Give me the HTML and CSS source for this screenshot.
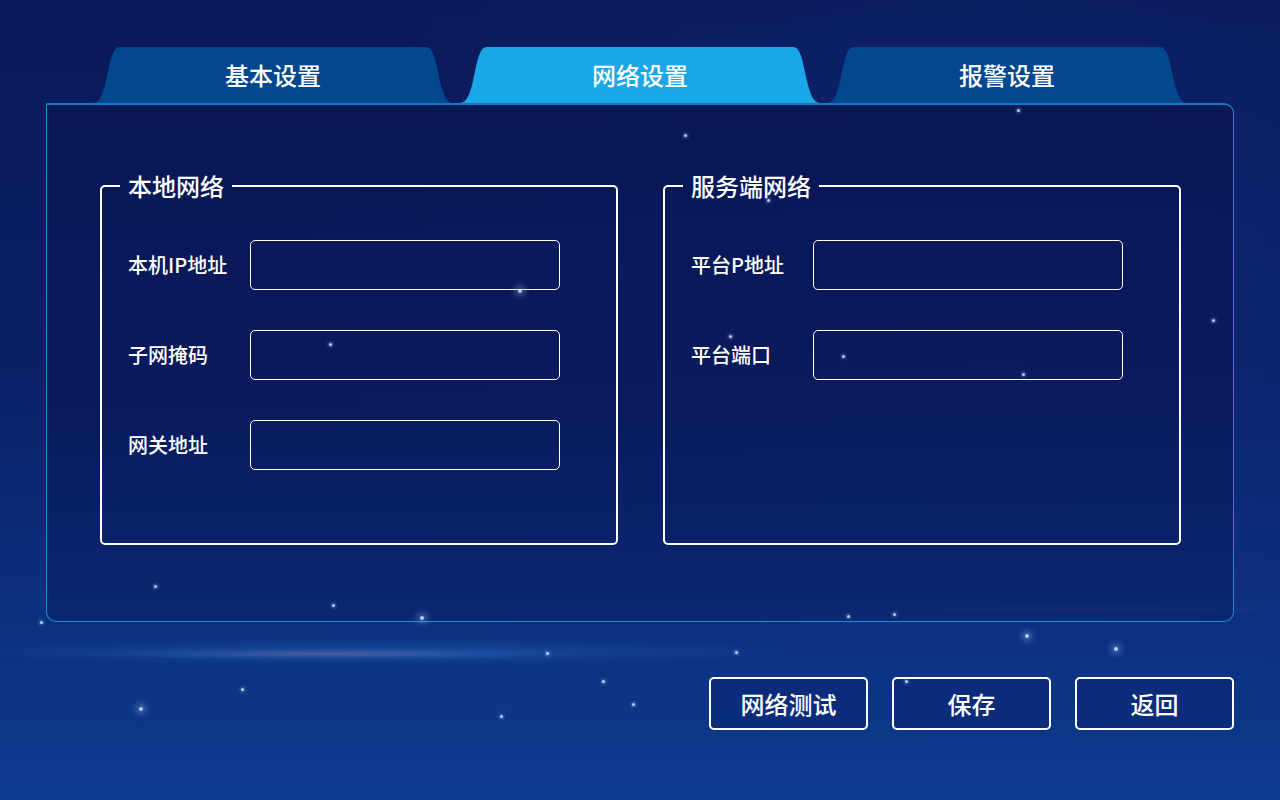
FILE: index.html
```html
<!DOCTYPE html>
<html lang="zh-CN">
<head>
<meta charset="utf-8">
<title>网络设置</title>
<link rel="stylesheet" href="styles.css">
</head>
<body>
<div class="app">
  <div class="stars">
    <span class="star" style="left:685px;top:135px"></span>
    <span class="star" style="left:1018px;top:110px"></span>
    <span class="star big" style="left:519px;top:290px"></span>
    <span class="star" style="left:330px;top:344px"></span>
    <span class="star" style="left:768px;top:200px"></span>
    <span class="star" style="left:730px;top:336px"></span>
    <span class="star" style="left:843px;top:356px"></span>
    <span class="star" style="left:1023px;top:374px"></span>
    <span class="star" style="left:1213px;top:320px"></span>
    <span class="star" style="left:155px;top:586px"></span>
    <span class="star" style="left:333px;top:605px"></span>
    <span class="star big" style="left:421px;top:617px"></span>
    <span class="star" style="left:41px;top:622px"></span>
    <span class="star" style="left:894px;top:614px"></span>
    <span class="star" style="left:848px;top:616px"></span>
    <span class="star big" style="left:1026px;top:635px"></span>
    <span class="star big" style="left:1115px;top:648px"></span>
    <span class="star" style="left:547px;top:653px"></span>
    <span class="star" style="left:736px;top:652px"></span>
    <span class="star" style="left:906px;top:681px"></span>
    <span class="star" style="left:242px;top:689px"></span>
    <span class="star big" style="left:140px;top:708px"></span>
    <span class="star" style="left:633px;top:704px"></span>
    <span class="star" style="left:501px;top:716px"></span>
    <span class="star" style="left:603px;top:681px"></span>
  </div>

  <nav class="tabs">
    <div class="tab">基本设置</div>
    <div class="tab active">网络设置</div>
    <div class="tab">报警设置</div>
  </nav>

  <section class="panel">
    <fieldset class="group">
      <legend>本地网络</legend>
      <div class="row"><label>本机IP地址</label><input class="field" type="text"></div>
      <div class="row"><label>子网掩码</label><input class="field" type="text"></div>
      <div class="row"><label>网关地址</label><input class="field" type="text"></div>
    </fieldset>
    <fieldset class="group">
      <legend>服务端网络</legend>
      <div class="row"><label>平台P地址</label><input class="field" type="text"></div>
      <div class="row"><label>平台端口</label><input class="field" type="text"></div>
    </fieldset>
  </section>

  <div class="actions">
    <button class="btn">网络测试</button>
    <button class="btn">保存</button>
    <button class="btn">返回</button>
  </div>
</div>
</body>
</html>
```
FILE: styles.css
```css
html, body {
  margin: 0;
  padding: 0;
}
body {
  width: 1280px;
  height: 800px;
  overflow: hidden;
  font-family: "Noto Sans CJK SC", "Noto Sans", "Liberation Sans", sans-serif;
  color: #ffffff;
  background: #0b1f66;
}
.app {
  position: relative;
  width: 1280px;
  height: 800px;
  box-sizing: border-box;
  padding-top: 47px;
  background:
    radial-gradient(ellipse 260px 6px at 330px 654px, rgba(200,120,160,0.35), rgba(60,140,220,0.15) 60%, transparent 100%),
    radial-gradient(ellipse 420px 14px at 380px 652px, rgba(60,150,230,0.25), transparent 100%),
    radial-gradient(ellipse 200px 5px at 1080px 610px, rgba(200,120,160,0.25), transparent 100%),
    radial-gradient(ellipse 700px 500px at 1000px 300px, rgba(20,50,140,0.35), transparent 100%),
    linear-gradient(180deg, #0a1a5a 0%, #0b1f66 45%, #0c2f7e 75%, #0b3b8e 100%);
}
.stars {
  position: absolute;
  inset: 0;
  pointer-events: none;
  z-index: 3;
}
.star {
  position: absolute;
  width: 3px;
  height: 3px;
  margin: -1px 0 0 -1px;
  border-radius: 50%;
  background: rgba(220,235,255,0.85);
  box-shadow: 0 0 3px 1px rgba(150,190,255,0.45);
}
.star.big {
  width: 4px;
  height: 4px;
  box-shadow: 0 0 6px 3px rgba(170,200,255,0.4);
}

/* Tabs */
.tabs {
  display: flex;
  gap: 7px;
  margin-left: 93px;
  height: 56px;
  position: relative;
  z-index: 2;
}
.tab {
  width: 360px;
  height: 56px;
  display: flex;
  align-items: center;
  justify-content: center;
  padding-bottom: 2px;
  box-sizing: border-box;
  font-size: 24px;
  font-weight: 500;
  background: #03478f;
  clip-path: path("M0,56 C7,56 10,46 13,34 C17,16 19,0 27,0 L333,0 C341,0 343,16 347,34 C350,46 353,56 360,56 Z");
}
.tab.active {
  background: #19a7e9;
}

/* Panel */
.panel {
  margin: 0 46px;
  height: 519px;
  box-sizing: border-box;
  border: 1px solid #1d8cd6;
  border-top: 2px solid #1576c4;
  border-radius: 0 10px 10px 10px;
  background: linear-gradient(180deg, rgba(8,22,84,0.95) 0%, rgba(9,26,92,0.88) 60%, rgba(10,36,108,0.75) 100%);
  padding: 64px 52px 0 53px;
  display: flex;
  gap: 45px;
  position: relative;
}

.group {
  margin: 0;
  width: 518px;
  height: 376px;
  box-sizing: border-box;
  border: 2px solid #ffffff;
  border-radius: 5px;
  padding: 0 0 0 26px;
  min-width: 0;
}
.group legend {
  margin-left: -8px;
  padding: 0 8px;
  font-size: 24px;
  line-height: 34px;
  font-weight: 500;
}
.row {
  display: flex;
  align-items: center;
  height: 49px;
  margin-top: 41px;
}
.row:first-of-type {
  margin-top: 37px;
}
.row label {
  width: 122px;
  font-size: 20px;
  font-weight: 500;
}
.field {
  width: 310px;
  height: 50px;
  box-sizing: border-box;
  border: 1.5px solid #ffffff;
  border-radius: 5px;
  background: transparent;
  outline: none;
  color: #ffffff;
  font-size: 18px;
  font-family: inherit;
  padding: 0 12px;
}

/* Buttons */
.actions {
  display: flex;
  justify-content: flex-end;
  gap: 24px;
  margin: 55px 46px 0 0;
}
.btn {
  width: 159px;
  height: 53px;
  box-sizing: border-box;
  border: 2px solid #ffffff;
  border-radius: 5px;
  background: rgba(10,30,100,0.35);
  color: #ffffff;
  font-family: inherit;
  font-size: 24px;
  font-weight: 500;
  cursor: pointer;
}
```
